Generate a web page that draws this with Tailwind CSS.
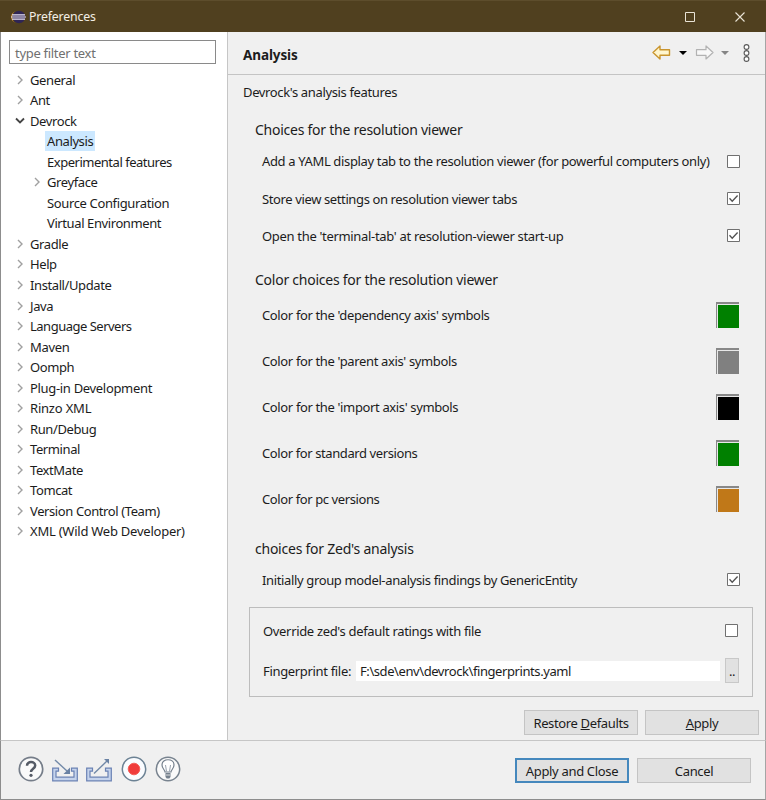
<!DOCTYPE html>
<html lang="en">
<head>
<meta charset="utf-8">
<title>Preferences</title>
<script src="https://cdn.jsdelivr.net/npm/@tailwindcss/browser@4"></script>
</head>
<body class="w-[766px] h-[800px] overflow-hidden bg-[#f0f0f0] font-['Noto_Sans','Open_Sans',sans-serif] text-[13px] leading-[20px] tracking-[-0.36px] text-[#1c1c1c] whitespace-nowrap">
<svg class="hidden">
  <symbol id="right" viewBox="0 0 8 10"><path d="M2 1l4 4-4 4" fill="none" stroke="#a0a0a0" stroke-width="1.4"/></symbol>
  <symbol id="down" viewBox="0 0 10 8"><path d="M1 1.500l4 4 4-4" fill="none" stroke="#444" stroke-width="1.800"/></symbol>
  <symbol id="box" viewBox="0 0 13 13"><path d="M.5.5h12v12H.5z" fill="#fff" stroke="#707070"/></symbol>
  <symbol id="checked" viewBox="0 0 13 13"><path d="M.5.5h12v12H.5z" fill="#fff" stroke="#707070"/><path d="M2.500 6.300l2.700 2.900 5.400-5.700" fill="none" stroke="#505050" stroke-width="1.300"/></symbol>
  <symbol id="tray" viewBox="0 0 28 16"><path d="M7.500 2.200H1.700v12.600h24.600V2.200H20.500v3h2.500v6H5v-6h2.500z" fill="#c5d3ec" stroke="#6a82b4" stroke-width="1.200"/></symbol>
</svg>
<div class="flex flex-col w-[766px] h-[800px]">
  <header class="flex items-center h-[32px] bg-[#50401f] text-[#f3efe6] pl-[10px] shrink-0 border-t border-[#5d4d2c]">
    <svg width="16" height="14" viewBox="0 0 16 14" class="mr-[3px]"><path d="M6 1a6.500 6.500 0 000 12C3 12 1 10 1 7s2-5 5-6z" fill="#c98a38"/><circle cx="9" cy="7" r="6.200" fill="#2f2555"/><path d="M2 4.800h13M1 7h15M2 9.200h13" stroke="#e9e4f4" stroke-width="1.200"/></svg>
    <span class="grow text-[12.300px] tracking-[-0.150px]">Preferences</span>
    <svg width="10" height="10" class="mr-[40px]"><path d="M.5.5h9v9h-9z" fill="none" stroke="#e9e3d5"/></svg>
    <svg width="10" height="10" class="mr-[21px]"><path d="M.5.5l9 9M9.500.5l-9 9" fill="none" stroke="#e9e3d5" stroke-width="1.100"/></svg>
  </header>
  <div class="flex h-[708px] shrink-0">
    <aside class="w-[228px] shrink-0 bg-white border-l border-r border-l-[#8d8d8d] border-r-[#c6c6c6] pl-[8px] pt-[8px]">
      <div class="w-[207px] h-[24px] border border-[#8a8a8a] flex items-center px-[5px] pt-[1px] text-[#707070] tracking-[-0.3px]">type filter text</div>
      <ul class="mt-[5.600px] tracking-[-0.4px]">
        <li class="flex items-center h-[20.52px]"><svg class="w-[8px] h-[10px] ml-[7px] mr-[6px]"><use href="#right"/></svg>General</li>
        <li class="flex items-center h-[20.52px]"><svg class="w-[8px] h-[10px] ml-[7px] mr-[6px]"><use href="#right"/></svg>Ant</li>
        <li class="flex items-center h-[20.52px]"><svg class="w-[10px] h-[8px] ml-[6px] mr-[5px]"><use href="#down"/></svg>Devrock</li>
        <li class="flex items-center h-[20.52px] pl-[36px]"><span class="bg-[#cce8ff] px-[2px] h-[20px]">Analysis</span></li>
        <li class="flex items-center h-[20.52px] pl-[38px] tracking-[-0.48px]">Experimental features</li>
        <li class="flex items-center h-[20.52px]"><svg class="w-[8px] h-[10px] ml-[24px] mr-[6px]"><use href="#right"/></svg>Greyface</li>
        <li class="flex items-center h-[20.52px] pl-[38px] tracking-[-0.36px]">Source Configuration</li>
        <li class="flex items-center h-[20.52px] pl-[38px]">Virtual Environment</li>
        <li class="flex items-center h-[20.52px]"><svg class="w-[8px] h-[10px] ml-[7px] mr-[6px]"><use href="#right"/></svg>Gradle</li>
        <li class="flex items-center h-[20.52px]"><svg class="w-[8px] h-[10px] ml-[7px] mr-[6px]"><use href="#right"/></svg>Help</li>
        <li class="flex items-center h-[20.52px]"><svg class="w-[8px] h-[10px] ml-[7px] mr-[6px]"><use href="#right"/></svg>Install/Update</li>
        <li class="flex items-center h-[20.52px]"><svg class="w-[8px] h-[10px] ml-[7px] mr-[6px]"><use href="#right"/></svg>Java</li>
        <li class="flex items-center h-[20.52px] tracking-[-0.5px]"><svg class="w-[8px] h-[10px] ml-[7px] mr-[6px]"><use href="#right"/></svg>Language Servers</li>
        <li class="flex items-center h-[20.52px] tracking-[-0.3px]"><svg class="w-[8px] h-[10px] ml-[7px] mr-[6px]"><use href="#right"/></svg>Maven</li>
        <li class="flex items-center h-[20.52px]"><svg class="w-[8px] h-[10px] ml-[7px] mr-[6px]"><use href="#right"/></svg>Oomph</li>
        <li class="flex items-center h-[20.52px] tracking-[-0.32px]"><svg class="w-[8px] h-[10px] ml-[7px] mr-[6px]"><use href="#right"/></svg>Plug-in Development</li>
        <li class="flex items-center h-[20.52px] tracking-[-0.2px]"><svg class="w-[8px] h-[10px] ml-[7px] mr-[6px]"><use href="#right"/></svg>Rinzo XML</li>
        <li class="flex items-center h-[20.52px]"><svg class="w-[8px] h-[10px] ml-[7px] mr-[6px]"><use href="#right"/></svg>Run/Debug</li>
        <li class="flex items-center h-[20.52px]"><svg class="w-[8px] h-[10px] ml-[7px] mr-[6px]"><use href="#right"/></svg>Terminal</li>
        <li class="flex items-center h-[20.52px]"><svg class="w-[8px] h-[10px] ml-[7px] mr-[6px]"><use href="#right"/></svg>TextMate</li>
        <li class="flex items-center h-[20.52px]"><svg class="w-[8px] h-[10px] ml-[7px] mr-[6px]"><use href="#right"/></svg>Tomcat</li>
        <li class="flex items-center h-[20.52px]"><svg class="w-[8px] h-[10px] ml-[7px] mr-[6px]"><use href="#right"/></svg>Version Control (Team)</li>
        <li class="flex items-center h-[20.52px] tracking-[-0.24px]"><svg class="w-[8px] h-[10px] ml-[7px] mr-[6px]"><use href="#right"/></svg>XML (Wild Web Developer)</li>
      </ul>
    </aside>
    <main class="grow flex flex-col border-r border-[#a5a5a5]">
      <div class="h-[43px] shrink-0 border-b border-[#c4c4c4] flex items-center pl-[15px] pr-[15px]">
        <h1 class="grow font-bold text-[13.500px] tracking-[-0.1px] pt-[4px]">Analysis</h1>
        <svg width="98" height="20" viewBox="0 0 98 20" fill="none">
          <path d="M1 10l7-6.500v3.700h9.500v5.600H8v3.700z" transform="translate(0 -.5)" fill="#fff6cf" stroke="#c9952e" stroke-width="1.400" stroke-linejoin="round"/>
          <path d="M27 8h8l-4 4z" fill="#000"/>
          <path d="M61 10l-7-6.500v3.700h-9.500v5.600H54v3.700z" transform="translate(0 -.5)" fill="#f8f8f8" stroke="#b2b2b2" stroke-width="1.200" stroke-linejoin="round"/>
          <path d="M69 8h8l-4 4z" fill="#858585"/>
          <g stroke="#5a5a5a" stroke-width="1.100" fill="#fff"><circle cx="94.500" cy="4" r="2.400"/><circle cx="94.500" cy="10" r="2.400"/><circle cx="94.500" cy="16" r="2.400"/></g>
        </svg>
      </div>
      <div class="grow flex flex-col pl-[15px]">
        <p class="h-[24px] mt-[5px] flex items-center">Devrock's analysis features</p>
        <h2 class="h-[24px] mt-[13px] pl-[12px] pt-px flex items-center text-[14px] tracking-[-0.25px]">Choices for the resolution viewer</h2>
        <div class="h-[24px] mt-[8px] pl-[19px] pr-[25px] flex items-center justify-between"><span class="tracking-[-0.35px]">Add a YAML display tab to the resolution viewer (for powerful computers only)</span><svg class="w-[13px] h-[13px]"><use href="#box"/></svg></div>
        <div class="h-[24px] mt-[13px] pl-[19px] pr-[25px] flex items-center justify-between"><span class="tracking-[-0.38px] pt-px">Store view settings on resolution viewer tabs</span><svg class="w-[13px] h-[13px]"><use href="#checked"/></svg></div>
        <div class="h-[24px] mt-[13px] pl-[19px] pr-[25px] flex items-center justify-between"><span class="tracking-[-0.32px] pt-px">Open the 'terminal-tab' at resolution-viewer start-up</span><svg class="w-[13px] h-[13px]"><use href="#checked"/></svg></div>
        <h2 class="h-[24px] mt-[21px] pl-[12px] flex items-center text-[14px] tracking-[-0.25px]">Color choices for the resolution viewer</h2>
        <div class="h-[24px] mt-[11px] pl-[19px] pr-[26px] flex items-center justify-between">Color for the 'dependency axis' symbols<i class="w-[23px] h-[26px] border-t-2 border-l border-[#888] bg-[#008000] shadow-[inset_1px_1px_0_#e8e8e8]"></i></div>
        <div class="h-[24px] mt-[22px] pl-[19px] pr-[26px] flex items-center justify-between">Color for the 'parent axis' symbols<i class="w-[23px] h-[26px] border-t-2 border-l border-[#888] bg-[#808080] shadow-[inset_1px_1px_0_#e8e8e8]"></i></div>
        <div class="h-[24px] mt-[22px] pl-[19px] pr-[26px] flex items-center justify-between">Color for the 'import axis' symbols<i class="w-[23px] h-[26px] border-t-2 border-l border-[#888] bg-black shadow-[inset_1px_1px_0_#e8e8e8]"></i></div>
        <div class="h-[24px] mt-[22px] pl-[19px] pr-[26px] flex items-center justify-between tracking-[-0.4px]">Color for standard versions<i class="w-[23px] h-[26px] border-t-2 border-l border-[#888] bg-[#008000] shadow-[inset_1px_1px_0_#e8e8e8]"></i></div>
        <div class="h-[24px] mt-[22px] pl-[19px] pr-[26px] flex items-center justify-between tracking-[-0.4px]">Color for pc versions<i class="w-[23px] h-[26px] border-t-2 border-l border-[#888] bg-[#c07818] shadow-[inset_1px_1px_0_#e8e8e8]"></i></div>
        <h2 class="h-[24px] mt-[25px] pl-[12px] pt-px flex items-center text-[14px] tracking-[-0.24px]">choices for Zed's analysis</h2>
        <div class="h-[24px] mt-[7px] pl-[19px] pr-[25px] flex items-center justify-between"><span class="pt-[2px]">Initially group model-analysis findings by GenericEntity</span><svg class="w-[13px] h-[13px]"><use href="#checked"/></svg></div>
        <div class="mt-[16px] ml-[6px] w-[504px] h-[90px] border border-[#bdbdbd] pl-[13px] pr-[12px] shrink-0">
          <div class="h-[24px] mt-[10px] flex items-center justify-between pr-[2px]"><span class="tracking-[-0.33px] pt-[2px]">Override zed's default ratings with file</span><svg class="w-[13px] h-[13px]"><use href="#box"/></svg></div>
          <div class="h-[26px] mt-[15px] flex items-center pt-px"><span class="w-[93px] tracking-[-0.33px]">Fingerprint file:</span><span class="w-[364px] h-[20px] bg-white pl-[4px] tracking-[-0.42px]">F:\sde\env\devrock\fingerprints.yaml</span><span class="ml-[5px] w-[14px] h-[25px] bg-[#e1e1e1] border border-[#c8c8c8] flex items-center justify-center">..</span></div>
        </div>
        <div class="flex mt-[13px] ml-[281px] gap-[7px]">
          <button class="w-[114px] h-[25px] bg-[#e1e1e1] border border-[#c4c4c4] text-center leading-[25px]">Restore <u>D</u>efaults</button>
          <button class="w-[114px] h-[25px] bg-[#e1e1e1] border border-[#c4c4c4] text-center leading-[25px]"><u>A</u>pply</button>
        </div>
      </div>
    </main>
  </div>
  <footer class="h-[60px] shrink-0 border-t border-[#c6c6c6] border-b border-b-[#8d8d8d] border-l border-l-[#8d8d8d] border-r border-r-[#a5a5a5] flex items-center pl-[17px] pr-[14px]">
    <div class="flex grow items-center pb-[2px]">
    <svg width="26" height="26" viewBox="0 0 26 26" fill="none"><circle cx="13" cy="13" r="11.700" fill="#fafafa" stroke="#757d89" stroke-width="1.700"/><path d="M9 9.700c0-5 8.200-4.500 8.200-.2 0 3.400-4.200 3.100-4.200 6.500" stroke="#555b66" stroke-width="2.500"/><circle cx="13" cy="19.300" r="1.600" fill="#555b66"/></svg>
    <svg width="28" height="26" viewBox="0 0 28 26" class="ml-[7px]" fill="none"><use href="#tray" y="10" width="28" height="16"/><path d="M4 4l12 11" stroke="#7289a8" stroke-width="1.400"/><path d="M19 11.500V18h-6.500z" fill="#6a82a4"/></svg>
    <svg width="28" height="26" viewBox="0 0 28 26" class="ml-[6px]" fill="none"><use href="#tray" y="10" width="28" height="16"/><path d="M9 17.500L22 5" stroke="#7289a8" stroke-width="1.400"/><path d="M19 3h5v5z" fill="#6a82a4"/></svg>
    <svg width="26" height="26" viewBox="0 0 26 26" class="ml-[8px]"><circle cx="13" cy="13" r="11.700" fill="#fafcff" stroke="#6c8294" stroke-width="1.500"/><circle cx="13" cy="13" r="5.800" fill="#f03c3c" stroke="#f5605a"/></svg>
    <svg width="26" height="26" viewBox="0 0 26 26" class="ml-[8px]" fill="none"><circle cx="13" cy="13" r="11.700" fill="#fafafa" stroke="#78838f" stroke-width="1.500"/><path d="M10 16c0-2-3-3.500-3-7 0-7 12-7 12 0 0 3.500-3 5-3 7z" stroke="#75808d" stroke-width="1.200" fill="#fff"/><path d="M11.500 15.500L10.500 9M14.500 15.500l1-6.500" stroke="#98a2ae"/><path d="M10.500 17h5v4l-1.200 1.500h-2.600L10.500 21z" fill="#75808d"/><path d="M11 19h4" stroke="#ddd"/></svg>
    </div>
    <button class="w-[114px] h-[25px] mt-px bg-[#e1e1e1] border-2 border-[#4588bd] text-center leading-[22px] mr-[8px] tracking-[-0.33px]">Apply and Close</button>
    <button class="w-[114px] h-[25px] mt-px bg-[#e1e1e1] border border-[#c4c4c4] text-center leading-[24px]">Cancel</button>
  </footer>
</div>
</body>
</html>
